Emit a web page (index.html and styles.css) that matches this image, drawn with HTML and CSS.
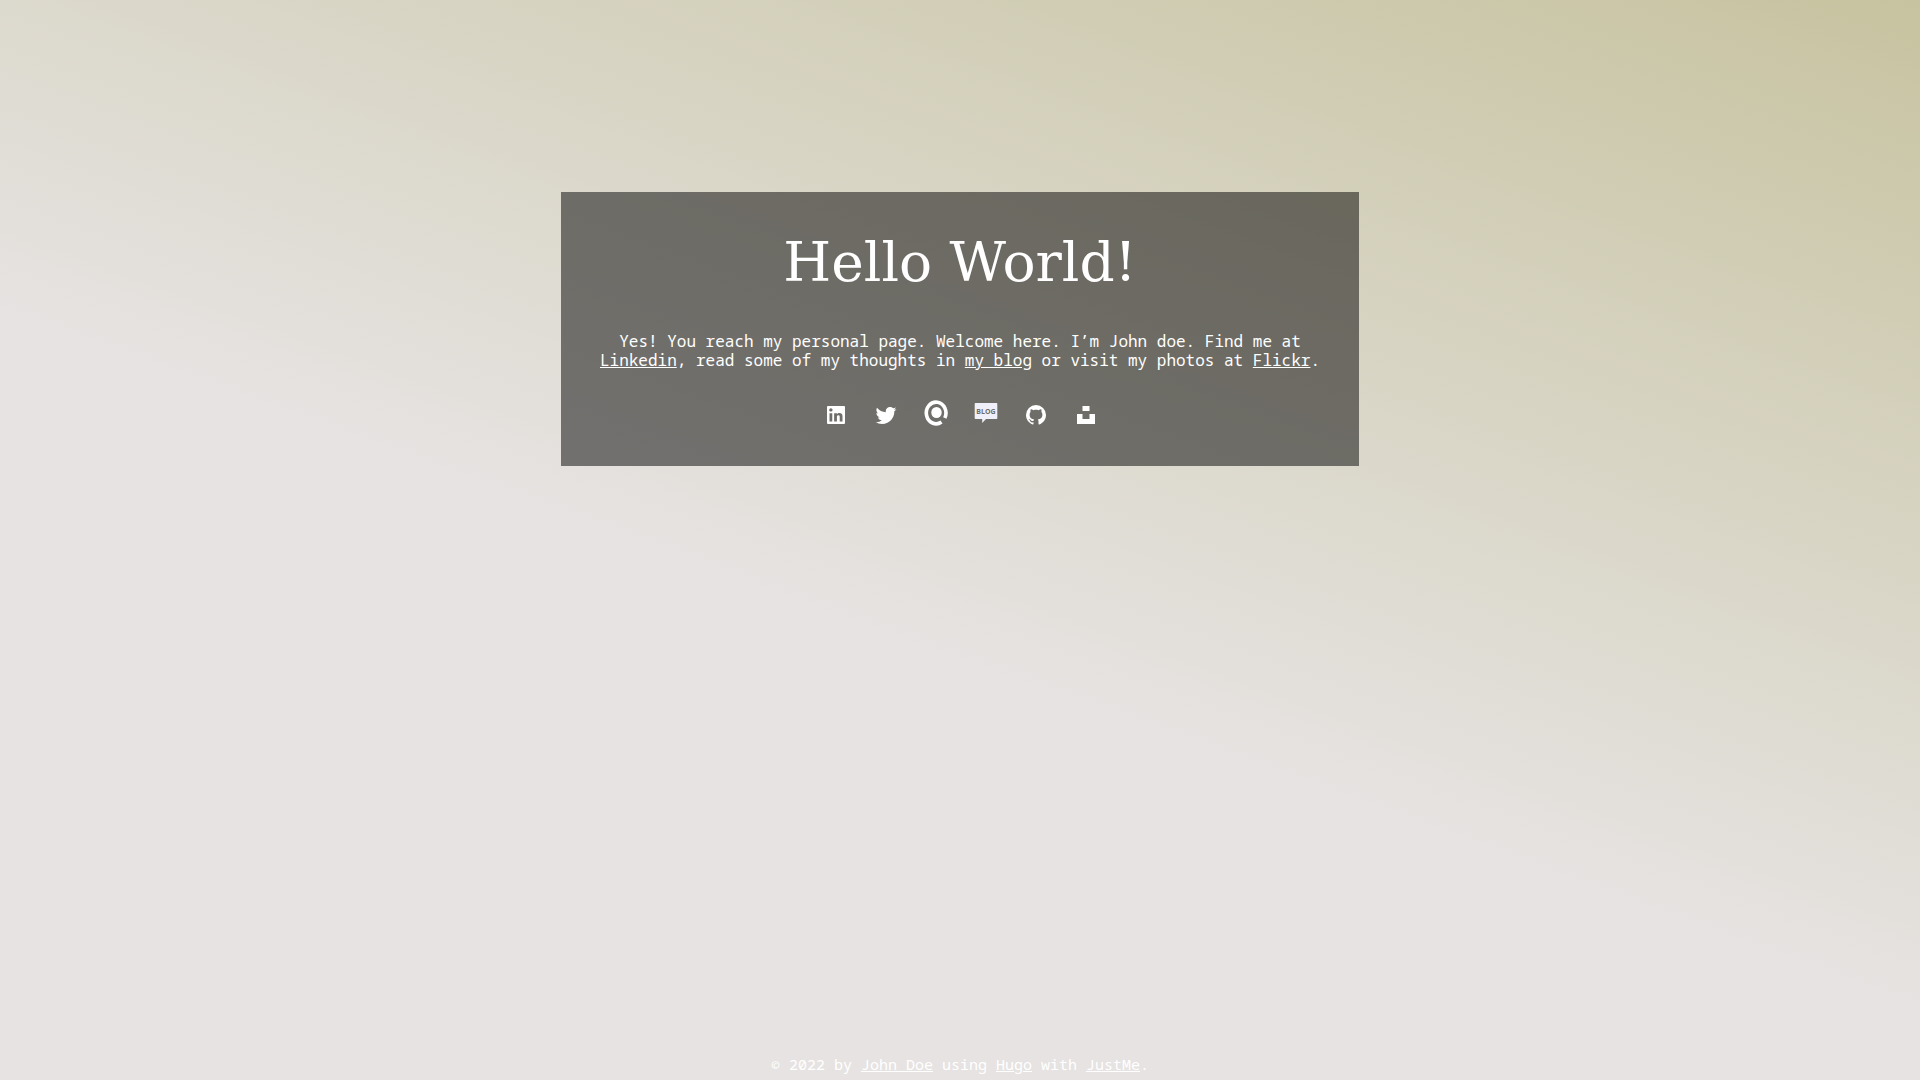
FILE: index.html
```
<!DOCTYPE html>
<html lang="en">
<head>
    <meta charset="UTF-8">
    <meta name="viewport" content="width=device-width, initial-scale=1.0">
    <title>Hello World!</title>
    <link rel="stylesheet" href="styles.css">
</head>
<body>
    <main class="card">
        <h1>Hello World!</h1>
        <p class="intro">Yes! You reach my personal page. Welcome here. I’m John doe. Find me at <a href="#">Linkedin</a>, read some of my thoughts in <a href="#">my blog</a> or visit my photos at <a href="#">Flickr</a>.</p>

        <nav class="social">
            <a href="#" aria-label="LinkedIn">
                <svg class="icon" viewBox="0 0 24 24"><path d="M20 3a1 1 0 0 1 1 1v16a1 1 0 0 1-1 1H4a1 1 0 0 1-1-1V4a1 1 0 0 1 1-1h16m-1.500 15.500v-5.300a3.260 3.260 0 0 0-3.260-3.260c-.85 0-1.840.52-2.320 1.300v-1.110h-2.790v8.370h2.790v-4.930c0-.77.62-1.400 1.390-1.400a1.400 1.400 0 0 1 1.400 1.400v4.930h2.790M6.880 8.560a1.680 1.680 0 0 0 1.680-1.680c0-.93-.75-1.690-1.680-1.690a1.690 1.690 0 0 0-1.690 1.690c0 .93.76 1.680 1.690 1.680m1.390 9.940v-8.370H5.500v8.370h2.770z"/></svg>
            </a>
            <a href="#" aria-label="Twitter">
                <svg class="icon" viewBox="0 0 24 24"><path d="M22.460 6c-.77.35-1.600.58-2.460.69.88-.53 1.560-1.370 1.880-2.380-.83.5-1.750.85-2.720 1.050C18.370 4.500 17.260 4 16 4c-2.350 0-4.270 1.920-4.270 4.290 0 .34.04.67.11.98C8.280 9.090 5.110 7.380 3 4.790c-.37.63-.58 1.370-.58 2.150 0 1.490.75 2.810 1.910 3.560-.71 0-1.370-.2-1.950-.5v.03c0 2.080 1.480 3.820 3.440 4.210a4.220 4.220 0 0 1-1.930.07 4.280 4.280 0 0 0 4 2.980 8.521 8.521 0 0 1-5.330 1.840c-.34 0-.68-.02-1.020-.06C3.440 20.290 5.700 21 8.120 21 16 21 20.330 14.460 20.330 8.790c0-.19 0-.37-.01-.56.84-.6 1.560-1.360 2.140-2.230z"/></svg>
            </a>
            <a href="#" aria-label="Mail">
                <svg class="icon" viewBox="0 0 24 24">
                    <path class="stroke" d="M17.500 19A9.800 10.800 0 1 1 20.800 15"/>
                    <ellipse cx="12.500" cy="9.500" rx="5.200" ry="5.600"/>
                </svg>
            </a>
            <a href="#" aria-label="Blog">
                <svg class="icon blog" viewBox="0 0 24 24">
                    <path d="M1.500 0h21a.8.8 0 0 1 .8.8v14.500a.8.8 0 0 1-.8.8H12l-3.800 4v-4H1.500a.8.8 0 0 1-.8-.8V.8a.8.8 0 0 1 .8-.8z"/>
                    <text x="12" y="10.500">BLOG</text>
                </svg>
            </a>
            <a href="#" aria-label="GitHub">
                <svg class="icon" viewBox="0 0 24 24"><path d="M12 2A10 10 0 0 0 2 12c0 4.420 2.870 8.170 6.840 9.500.5.080.66-.23.66-.5v-1.690c-2.770.6-3.360-1.340-3.360-1.340-.46-1.160-1.110-1.470-1.110-1.470-.91-.62.07-.6.07-.6 1 .07 1.530 1.030 1.530 1.030.87 1.520 2.340 1.070 2.910.83.09-.65.35-1.090.63-1.340-2.220-.25-4.550-1.110-4.550-4.920 0-1.110.38-2 1.030-2.710-.1-.25-.45-1.290.1-2.640 0 0 .84-.27 2.750 1.020.79-.22 1.650-.33 2.500-.33s1.710.11 2.500.33c1.910-1.290 2.750-1.020 2.750-1.020.55 1.350.2 2.390.1 2.640.65.71 1.030 1.600 1.030 2.710 0 3.820-2.340 4.660-4.570 4.910.36.31.69.92.69 1.850V21c0 .27.16.59.67.5C19.140 20.160 22 16.420 22 12A10 10 0 0 0 12 2z"/></svg>
            </a>
            <a href="#" aria-label="Unsplash">
                <svg class="icon" viewBox="0 0 24 24"><path d="M8.500 3h7v5h-7zM3 11h5.500v5h7v-5H21v10H3z"/></svg>
            </a>
        </nav>
    </main>

    <footer>© 2022 by <a href="#">John Doe</a> using <a href="#">Hugo</a> with <a href="#">JustMe</a>.</footer>
</body>
</html>
```

FILE: styles.css
```
* {
    box-sizing: border-box;
}

body {
    display: flex;
    flex-direction: column;
    align-items: center;
    min-height: 100vh;
    margin: 0;
    padding: 192px 16px 6px;
    background: linear-gradient(20deg, #e6e3e2 43%, #c7c3a0 100%);
    color: #fff;
    font-family: "Noto Sans Mono", "DejaVu Sans Mono", monospace;
    font-size: 16px;
    line-height: 19px;
    text-align: center;
}

a {
    color: inherit;
}

.card {
    width: 100%;
    max-width: 798px;
    padding: 32px 24px 39px;
    background: rgba(0, 0, 0, 0.5);
}

h1 {
    margin: 0 0 32px;
    font-family: "Roboto Slab", "DejaVu Serif", serif;
    font-size: 55px;
    font-weight: 400;
    line-height: 76px;
}

.intro {
    margin: 0 0 33px;
}

.social {
    display: flex;
    justify-content: center;
    gap: 26px;
    padding-left: 2px;
}

.icon {
    display: block;
    width: 24px;
    height: 24px;
    fill: #fff;
    overflow: visible;
}

.icon .stroke {
    fill: none;
    stroke: #fff;
    stroke-width: 3.6;
}

.icon.blog {
    fill: #f0f0fa;
}

.blog text {
    fill: #6f6e69;
    font: bold 7px "Open Sans", sans-serif;
    text-anchor: middle;
}

footer {
    font-size: 15px;
    margin-top: auto;
}
```
